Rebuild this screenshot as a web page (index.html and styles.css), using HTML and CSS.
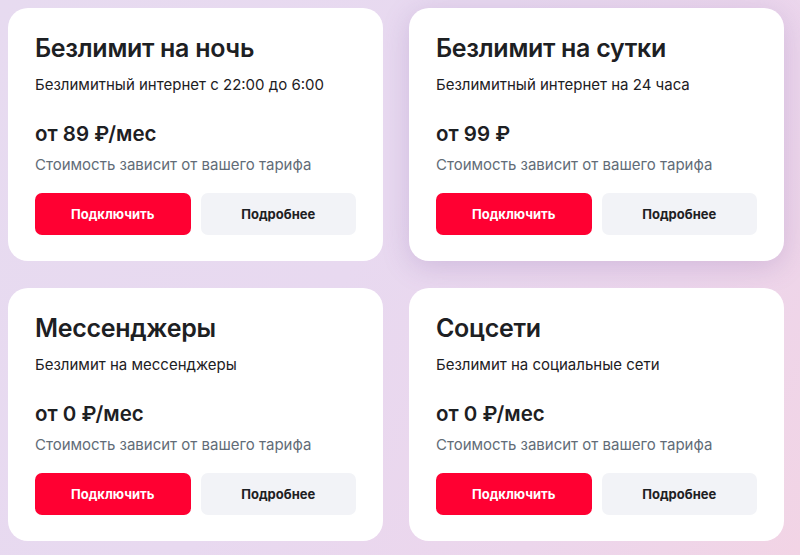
FILE: index.html
```html
<!DOCTYPE html>
<html lang="ru">
<head>
<meta charset="utf-8">
<link rel="stylesheet" href="styles.css">
</head>
<body>
<div class="grid">
  <div class="card">
    <div class="title">Безлимит на ночь</div>
    <div class="desc">Безлимитный интернет с 22:00 до 6:00</div>
    <div class="price">от 89 ₽/мес</div>
    <div class="note">Стоимость зависит от вашего тарифа</div>
    <div class="actions">
      <button class="btn btn-primary">Подключить</button>
      <button class="btn btn-secondary">Подробнее</button>
    </div>
  </div>
  <div class="card card-hover">
    <div class="title">Безлимит на сутки</div>
    <div class="desc">Безлимитный интернет на 24 часа</div>
    <div class="price">от 99 ₽</div>
    <div class="note">Стоимость зависит от вашего тарифа</div>
    <div class="actions">
      <button class="btn btn-primary">Подключить</button>
      <button class="btn btn-secondary">Подробнее</button>
    </div>
  </div>
  <div class="card">
    <div class="title">Мессенджеры</div>
    <div class="desc">Безлимит на мессенджеры</div>
    <div class="price">от 0 ₽/мес</div>
    <div class="note">Стоимость зависит от вашего тарифа</div>
    <div class="actions">
      <button class="btn btn-primary">Подключить</button>
      <button class="btn btn-secondary">Подробнее</button>
    </div>
  </div>
  <div class="card">
    <div class="title">Соцсети</div>
    <div class="desc">Безлимит на социальные сети</div>
    <div class="price">от 0 ₽/мес</div>
    <div class="note">Стоимость зависит от вашего тарифа</div>
    <div class="actions">
      <button class="btn btn-primary">Подключить</button>
      <button class="btn btn-secondary">Подробнее</button>
    </div>
  </div>
</div>
</body>
</html>
```
FILE: styles.css
```css
* { box-sizing: border-box; }
html, body { margin: 0; height: 100%; }
body {
  background: linear-gradient(120deg, #e7dbf0 0%, #e8d9f0 45%, #ecd6ec 75%, #f2d4e5 100%);
  font-family: Inter, "Noto Sans", sans-serif;
  color: #1d2023;
  overflow: hidden;
}
.grid {
  display: grid;
  grid-template-columns: 375px 375px;
  grid-auto-rows: 253px;
  column-gap: 26px;
  row-gap: 27px;
  padding: 8px 0 0 8px;
}
.card {
  background: #fff;
  border-radius: 20px;
  padding: 25px 27px 26px;
  display: flex;
  flex-direction: column;
}
.card-hover {
  box-shadow: 0 6px 28px rgba(120, 80, 160, 0.22);
}
.title {
  font-size: 25px;
  line-height: 30px;
  font-weight: 600;
  letter-spacing: -0.3px;
}
.desc {
  margin-top: 11px;
  font-size: 15px;
  line-height: 22px;
}
.price {
  margin-top: 24px;
  font-size: 20.5px;
  line-height: 28px;
  font-weight: 600;
}
.note {
  margin-top: 6px;
  font-size: 15px;
  line-height: 22px;
  color: #626c77;
}
.actions {
  margin-top: auto;
  display: flex;
  gap: 10px;
}
.btn {
  flex: 1;
  height: 42px;
  border: 0;
  border-radius: 7px;
  font-family: inherit;
  font-size: 13px;
  font-weight: 700;
}
.btn-primary { background: #ff0032; color: #fff; }
.btn-secondary { background: #f2f3f7; color: #1d2023; }
```
